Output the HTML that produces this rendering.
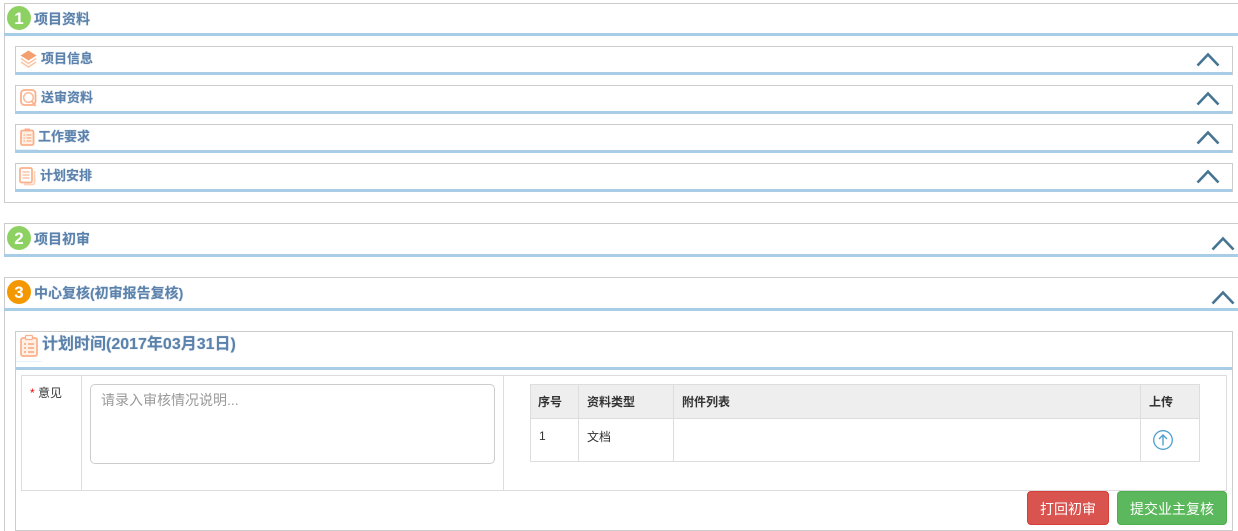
<!DOCTYPE html>
<html lang="zh">
<head>
<meta charset="utf-8">
<title>项目资料</title>
<style>
html,body{margin:0;padding:0;background:#fff;width:1238px;height:531px;overflow:hidden;}
body{position:relative;font-family:"Liberation Sans","Noto Sans CJK SC",sans-serif;font-size:12px;color:#333;}
.a{position:absolute;box-sizing:border-box;}
.box{border:1px solid #ccc;background:#fff;}
.open{border-right:none;}
.bar{height:3px;background:#a9cde6;}
.t{position:absolute;white-space:nowrap;font-weight:bold;font-size:13px;line-height:18px;color:#5b82ac;text-shadow:0 0 1px rgba(91,130,172,.55);}
.h{font-size:14px;}
.num{position:absolute;width:24px;height:24px;border-radius:50%;color:#fff;font-weight:bold;font-size:17px;line-height:25px;text-align:center;}
.g{background:#8dd162;}
.o{background:#f39800;}
.l{position:absolute;background:#ddd;}
.c{position:absolute;white-space:nowrap;font-size:12px;line-height:16px;color:#333;}
.btn{position:absolute;border-radius:4px;color:#fff;font-size:14px;text-align:center;line-height:34px;height:34px;box-sizing:border-box;}
svg{position:absolute;overflow:visible;}
.ch path{fill:none;stroke:#457592;stroke-width:2.600;}
</style>
</head>
<body>
<!-- panel 1 -->
<div class="a box open" style="left:4px;top:3px;width:1234px;height:200px;"></div>
<div class="a bar" style="left:4px;top:33px;width:1234px;"></div>
<div class="num g" style="left:7px;top:6px;">1</div>
<div class="t h" style="left:34px;top:10px;">项目资料</div>

<div class="a box" style="left:15px;top:46px;width:1218px;height:29px;"></div>
<div class="a bar" style="left:15px;top:72px;width:1217px;"></div>
<div class="t" style="left:41px;top:50px;">项目信息</div>
<svg style="left:20px;top:50px;" width="17" height="19" viewBox="0 0 17 19"><path d="M8.500 0.500L16.500 5.500 8.500 10.500 0.500 5.500Z" fill="#f2a070"/><path d="M1 8.500l7.500 5 7.500-5M1 12l7.500 5 7.500-5" fill="none" stroke="#fbc6a6" stroke-width="1.600"/></svg>
<svg class="ch" style="left:1196px;top:53px;" width="24" height="14" viewBox="0 0 24 14"><path d="M1.500 12.500L12 1.500l10.500 11"/></svg>

<div class="a box" style="left:15px;top:85px;width:1218px;height:29px;"></div>
<div class="a bar" style="left:15px;top:111px;width:1217px;"></div>
<div class="t" style="left:41px;top:89px;">送审资料</div>
<svg style="left:20px;top:89px;" width="17" height="18" viewBox="0 0 17 18"><rect x="1" y="1" width="14.500" height="15" rx="3.500" fill="none" stroke="#fbb08a" stroke-width="1.800"/><circle cx="8.500" cy="8.500" r="4.800" fill="none" stroke="#fbb996" stroke-width="1.500"/><path d="M11.500 12l4 5" stroke="#fbb08a" stroke-width="1.800"/></svg>
<svg class="ch" style="left:1196px;top:92px;" width="24" height="14" viewBox="0 0 24 14"><path d="M1.500 12.500L12 1.500l10.500 11"/></svg>

<div class="a box" style="left:15px;top:124px;width:1218px;height:29px;"></div>
<div class="a" style="left:16px;top:149px;width:22px;height:1px;background:#e6f0f8;"></div>
<div class="a bar" style="left:15px;top:150px;width:1217px;"></div>
<div class="t" style="left:38px;top:128px;">工作要求</div>
<svg style="left:20px;top:128px;" width="15" height="18" viewBox="0 0 15 18"><rect x="1" y="2.500" width="12.500" height="14.500" rx="1.500" fill="#fff0e6" stroke="#fbb08a" stroke-width="1.800"/><rect x="4.500" y="0.500" width="5.500" height="3" fill="#fbb08a"/><path d="M3.500 7h1.500M6.500 7h5M3.500 10h1.500M6.500 10h5M3.500 13h1.500M6.500 13h5" stroke="#fab08a" stroke-width="1.300"/></svg>
<svg class="ch" style="left:1196px;top:131px;" width="24" height="14" viewBox="0 0 24 14"><path d="M1.500 12.500L12 1.500l10.500 11"/></svg>

<div class="a box" style="left:15px;top:163px;width:1218px;height:29px;"></div>
<div class="a bar" style="left:15px;top:189px;width:1217px;"></div>
<div class="t" style="left:40px;top:167px;">计划安排</div>
<svg style="left:19px;top:167px;" width="17" height="19" viewBox="0 0 17 19"><path d="M15.500 4v11.500q0 2-2 2H5" fill="none" stroke="#fcd2b9" stroke-width="1.700"/><rect x="1" y="1" width="12" height="14.500" rx="1.500" fill="#fff" stroke="#fbb08a" stroke-width="1.700"/><path d="M3.500 5h7M3.500 8h7M3.500 11h7" stroke="#fbb996" stroke-width="1.300"/></svg>
<svg class="ch" style="left:1196px;top:170px;" width="24" height="14" viewBox="0 0 24 14"><path d="M1.500 12.500L12 1.500l10.500 11"/></svg>

<!-- panel 2 -->
<div class="a box open" style="left:4px;top:223px;width:1234px;height:34px;"></div>
<div class="a bar" style="left:4px;top:254px;width:1234px;"></div>
<div class="num g" style="left:7px;top:226px;">2</div>
<div class="t h" style="left:34px;top:230px;">项目初审</div>
<svg class="ch" style="left:1211px;top:237px;" width="24" height="14" viewBox="0 0 24 14"><path d="M1.500 12.500L12 1.500l10.500 11"/></svg>

<!-- panel 3 -->
<div class="a box open" style="left:4px;top:277px;width:1234px;height:254px;border-bottom:none;"></div>
<div class="a bar" style="left:4px;top:308px;width:1234px;"></div>
<div class="num o" style="left:7px;top:280px;">3</div>
<div class="t h" style="left:34px;top:284px;">中心复核(初审报告复核)</div>
<svg class="ch" style="left:1211px;top:291px;" width="24" height="14" viewBox="0 0 24 14"><path d="M1.500 12.500L12 1.500l10.500 11"/></svg>

<div class="a box" style="left:15px;top:331px;width:1218px;height:200px;"></div>
<div class="a" style="left:16px;top:361px;width:26px;height:1px;background:#e6f0f8;"></div>
<div class="a bar" style="left:16px;top:367px;width:1216px;"></div>
<div class="t" style="left:42px;top:335px;font-size:16px;line-height:20px;">计划时间(2017年03月31日)</div>
<svg style="left:20px;top:335px;" width="18" height="22" viewBox="0 0 18 22"><rect x="1" y="3" width="16" height="18" rx="2" fill="#fff0e6" stroke="#fbb08a" stroke-width="1.700"/><rect x="5.500" y="0.500" width="7" height="4" rx="1" fill="#fff" stroke="#fbb08a" stroke-width="1.300"/><path d="M4 9h2M8 9h6M4 13h2M8 13h6M4 17h2M8 17h6" stroke="#f8a67c" stroke-width="1.400"/></svg>

<!-- form grid -->
<div class="l" style="left:21px;top:375px;width:1206px;height:1px;"></div>
<div class="l" style="left:21px;top:490px;width:1206px;height:1px;"></div>
<div class="l" style="left:21px;top:375px;width:1px;height:116px;"></div>
<div class="l" style="left:81px;top:375px;width:1px;height:116px;"></div>
<div class="l" style="left:503px;top:375px;width:1px;height:116px;"></div>
<div class="l" style="left:1226px;top:375px;width:1px;height:116px;"></div>

<div class="c" style="left:30px;top:385px;color:#f00;">*</div>
<div class="c" style="left:38px;top:385px;">意见</div>

<div class="a" style="left:90px;top:384px;width:405px;height:80px;border:1px solid #ccc;border-radius:5px;"></div>
<div class="c" style="left:101px;top:392px;font-size:14px;color:#999;">请录入审核情况说明...</div>

<!-- table -->
<div class="a" style="left:530px;top:384px;width:670px;height:34px;background:#eee;"></div>
<div class="l" style="left:530px;top:384px;width:670px;height:1px;"></div>
<div class="l" style="left:530px;top:418px;width:670px;height:1px;"></div>
<div class="l" style="left:530px;top:461px;width:670px;height:1px;"></div>
<div class="l" style="left:530px;top:384px;width:1px;height:78px;"></div>
<div class="l" style="left:578px;top:384px;width:1px;height:78px;"></div>
<div class="l" style="left:673px;top:384px;width:1px;height:78px;"></div>
<div class="l" style="left:1140px;top:384px;width:1px;height:78px;"></div>
<div class="l" style="left:1199px;top:384px;width:1px;height:78px;"></div>

<div class="c" style="left:538px;top:394px;font-weight:bold;">序号</div>
<div class="c" style="left:587px;top:394px;font-weight:bold;">资料类型</div>
<div class="c" style="left:682px;top:394px;font-weight:bold;">附件列表</div>
<div class="c" style="left:1149px;top:394px;font-weight:bold;">上传</div>
<div class="c" style="left:539px;top:428px;">1</div>
<div class="c" style="left:587px;top:429px;">文档</div>
<svg style="left:1153px;top:430px;" width="20" height="20" viewBox="0 0 20 20"><circle cx="10" cy="10" r="9.300" fill="none" stroke="#4f9fd0" stroke-width="1.300"/><path d="M10 15.500V5M6 9l4-4 4 4" fill="none" stroke="#4f9fd0" stroke-width="1.400"/></svg>

<!-- buttons -->
<div class="btn" style="left:1027px;top:491px;width:82px;background:#d9534f;border:1px solid #d43f3a;">打回初审</div>
<div class="btn" style="left:1117px;top:491px;width:110px;background:#5cb85c;border:1px solid #4cae4c;">提交业主复核</div>
</body>
</html>
